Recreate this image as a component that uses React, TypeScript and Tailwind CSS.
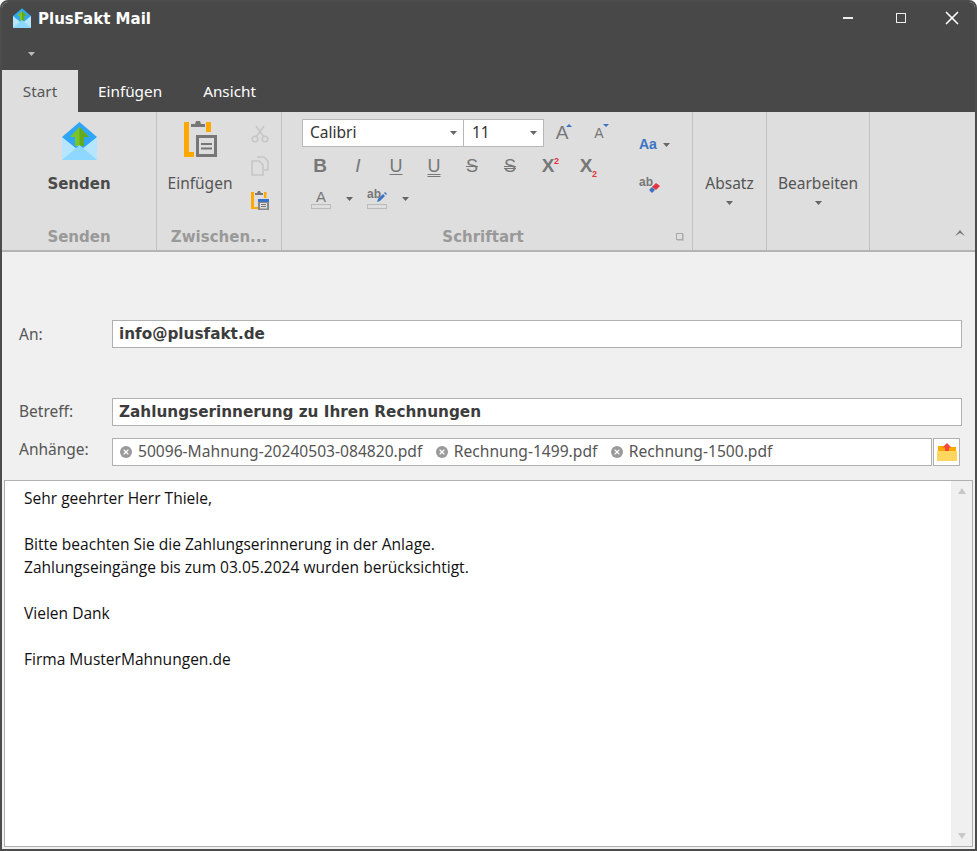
import { X } from "lucide-react";

const uiFont = "font-['Noto_Sans',sans-serif]";
const boldFont = "font-['DejaVu_Sans',sans-serif] font-bold";

const Caret = ({ className = "" }: { className?: string }) => (
  <svg viewBox="0 0 7 4" className={`block w-[7px] h-[4px] fill-[#666] ${className}`}>
    <polygon points="0,0 7,0 3.5,4" />
  </svg>
);

const MailIcon = ({ className = "" }: { className?: string }) => (
  <svg viewBox="0 0 35 38" className={className}>
    <polygon points="0,15 17.5,0 35,15 35,38 0,38" fill="#2ea5f5" />
    <polygon points="0,15 17.5,29 35,15 35,38 0,38" fill="#b5e5ff" />
    <polygon points="8,15 17.5,5 27,15 22,15 22,24 13,24 13,15" fill="#7cc529" />
    <polygon points="17.5,5 27,15 22,15 22,24 17.5,24" fill="#62ab1f" />
    <polygon points="0,38 17.5,23 35,38" fill="#8ed8ff" />
  </svg>
);

const PasteIcon = () => (
  <svg viewBox="0 0 34 37" className="w-[34px] h-[37px]">
    <path d="M1 2h5v30h5v5H1z" fill="#ffa800" />
    <rect x="23" y="2" width="5" height="10" fill="#ffa800" />
    <path d="M8 7V4h4l1-3h4l1 3h4v3z" fill="#777" />
    <rect x="14.5" y="16.5" width="18" height="19" fill="none" stroke="#777" strokeWidth="3" />
    <rect x="18" y="23" width="11" height="2" fill="#777" />
    <rect x="18" y="27.5" width="11" height="2" fill="#777" />
  </svg>
);

const CutIcon = () => (
  <svg viewBox="0 0 18 18" className="w-[18px] h-[18px]" fill="none" stroke="#c6c6c6" strokeWidth="1.6">
    <circle cx="4" cy="14" r="2.8" />
    <circle cx="14" cy="14" r="2.8" />
    <path d="M5.5 11.5 13 1M12.5 11.5 5 1" />
  </svg>
);

const CopyIcon = () => (
  <svg viewBox="0 0 18 20" className="w-[18px] h-[20px]" fill="none" stroke="#c6c6c6" strokeWidth="1.6">
    <path d="M6 1h7l4 4v9h-4" />
    <path d="M1 5h7l4 4v10H1z" fill="#dedede" />
  </svg>
);

const SmallPasteIcon = () => (
  <svg viewBox="0 0 18 19" className="w-[18px] h-[19px]">
    <path d="M0 1h3v15h4v2H0z" fill="#ffa800" />
    <rect x="13" y="1" width="2.5" height="6" fill="#ffa800" />
    <path d="M4 4V2h2l1-2h2l1 2h2v2z" fill="#777" />
    <rect x="7" y="8" width="11" height="11" fill="#888" />
    <rect x="7" y="8" width="11" height="3" fill="#3b73c4" />
    <rect x="9" y="12" width="7" height="5.5" fill="#dedede" />
    <rect x="10" y="13" width="5" height="1" fill="#777" />
    <rect x="10" y="15" width="5" height="1" fill="#777" />
  </svg>
);

const FolderIcon = () => (
  <svg viewBox="0 0 20 18" className="w-[20px] h-[18px]">
    <path d="M1 3h6l1 1h11v7H1z" fill="#ffa800" />
    <path d="M10 0l4.5 4.5H12V9H8V4.5H5.5z" fill="#f4483a" />
    <rect x="0" y="8" width="20" height="10" fill="#ffd75e" />
  </svg>
);

const PencilIcon = () => (
  <svg viewBox="0 0 10 10" className="w-[10px] h-[10px]">
    <path d="M0 10l1-3 5-5 2 2-5 5z" fill="#3b73c4" />
    <path d="M7 1l1-1 2 2-1 1z" fill="#3b73c4" />
  </svg>
);

const EraserIcon = () => (
  <svg viewBox="0 0 11 11" className="w-[11px] h-[11px]">
    <path d="M3 5l4-4 4 3-4 4z" fill="#e5323c" />
    <path d="M0 8l3-3 3 3-3 3z" fill="#3b73c4" />
  </svg>
);

const FmtButton = ({ children }: { children: React.ReactNode }) => (
  <div className="w-[38px] h-[22px] flex items-center justify-center relative font-['Liberation_Sans',sans-serif] text-[#777]">
    {children}
  </div>
);

const Group = ({ label, width, labelClass = "", children }: { label?: string; width: string; labelClass?: string; children?: React.ReactNode }) => (
  <div className={`${width} shrink-0 h-full flex flex-col border-r border-[#c0c0c0] relative`}>
    <div className="flex-1 min-h-0">{children}</div>
    {label && (
      <div className={`h-[33px] text-center text-[15px] leading-[40px] text-[#999] ${boldFont} ${labelClass}`}>{label}</div>
    )}
  </div>
);

const Field = ({ label, value, labelClass = "" }: { label: string; value: string; labelClass?: string }) => (
  <div className="flex items-center">
    <label className={`w-[110px] pl-[17px] text-[15.5px] text-[#555] ${uiFont} ${labelClass}`}>{label}</label>
    <div className={`flex-1 h-[28px] bg-white border border-[#b0b0b0] px-[6px] text-[15.25px] leading-[26px] text-[#3c3c3c] ${boldFont}`}>
      {value}
    </div>
  </div>
);

const Chip = ({ name }: { name: string }) => (
  <span className="flex items-center gap-[6px]">
    <span className="w-[12px] h-[12px] rounded-full bg-[#9a9a9a] flex items-center justify-center">
      <X size={8} color="#fff" strokeWidth={3.5} />
    </span>
    {name}
  </span>
);

export default function App() {
  return (
    <div className="w-[977px] h-[851px] bg-white overflow-hidden">
      <div className="w-full h-full rounded-t-[8px] border-2 border-[#4c4c4c] bg-[#f0f0f0] flex flex-col overflow-hidden">
        <header className="h-[68px] shrink-0 bg-[#484848]">
          <div className="flex items-center h-[34px] pl-[11px]">
            <MailIcon className="w-[18px] h-[20px] -mt-[2px]" />
            <span className={`ml-[7px] text-[15px] text-white ${boldFont}`}>PlusFakt Mail</span>
            <div className="ml-auto -mt-[2px] flex items-center gap-[29px] pr-[12px] text-white">
              <div className="w-[24px] h-[24px] flex items-center justify-center">
                <span className="block w-[10px] h-[1.5px] bg-[#eee]" />
              </div>
              <div className="w-[24px] h-[24px] flex items-center justify-center -mr-[1px]">
                <span className="block w-[10px] h-[10px] border-[1.5px] border-[#eee]" />
              </div>
              <X size={22} strokeWidth={1.8} />
            </div>
          </div>
          <Caret className="ml-[26px] mt-[16px] !fill-[#bbb]" />
        </header>

        <nav className={`h-[42px] shrink-0 bg-[#484848] flex text-[15.3px] leading-[42px] text-white ${uiFont}`}>
          <div className="w-[76px] bg-[#dedede] text-[#555] text-center">Start</div>
          <div className="ml-[20px]">Einfügen</div>
          <div className="ml-[41px]">Ansicht</div>
        </nav>

        <section className={`h-[140px] shrink-0 bg-[#dedede] border-b-2 border-[#b4b4b4] flex text-[15.5px] text-[#555] ${uiFont}`}>
          <Group label="Senden" width="w-[155px]">
            <div className="flex flex-col items-center pt-[10px]">
              <MailIcon className="w-[35px] h-[38px]" />
              <span className={`mt-[13px] text-[15px] text-[#4a4a4a] ${boldFont}`}>Senden</span>
            </div>
          </Group>

          <Group label="Zwischen..." width="w-[125px]">
            <div className="flex">
              <div className="w-[86px] flex flex-col items-center pt-[8px]">
                <PasteIcon />
                <span className="mt-[15px]">Einfügen</span>
              </div>
              <div className="flex flex-col items-start pl-[8px] pt-[13px]">
                <CutIcon />
                <div className="mt-[13px]"><CopyIcon /></div>
                <div className="mt-[15px]"><SmallPasteIcon /></div>
              </div>
            </div>
          </Group>

          <Group label="Schriftart" width="w-[411px]" labelClass="pr-[8px]">
            <div className="flex pl-[20px] pt-[7px]">
              <div className="w-[319px]">
                <div className="flex">
                  <div className="w-[162px] h-[28px] bg-white border border-[#b8b8b8] flex items-center justify-between pl-[7px] pr-[6px] text-[#333]">
                    Calibri <Caret />
                  </div>
                  <div className="w-[80px] h-[28px] bg-white border border-l-0 border-[#b8b8b8] flex items-center justify-between pl-[8px] pr-[6px] text-[#333]">
                    11 <Caret />
                  </div>
                  <div className="w-[36px] h-[28px] flex items-center justify-center text-[19px] text-[#777] relative font-['Liberation_Sans',sans-serif]">
                    A<span className="absolute left-[22px] top-[5px] w-0 h-0 border-l-[3px] border-r-[3px] border-b-[3px] border-l-transparent border-r-transparent border-b-[#3b73c4]" />
                  </div>
                  <div className="w-[38px] h-[28px] flex items-center justify-center text-[14px] text-[#777] relative font-['Liberation_Sans',sans-serif]">
                    A<span className="absolute left-[23px] top-[5px] w-0 h-0 border-l-[3px] border-r-[3px] border-t-[3px] border-l-transparent border-r-transparent border-t-[#3b73c4]" />
                  </div>
                </div>
                <div className="flex mt-[8px] -ml-[1px]">
                  <FmtButton><b className="text-[19px]">B</b></FmtButton>
                  <FmtButton><i className="text-[19px]">I</i></FmtButton>
                  <FmtButton><span className="text-[18px] underline underline-offset-2">U</span></FmtButton>
                  <FmtButton><span className="text-[18px] underline decoration-double underline-offset-2">U</span></FmtButton>
                  <FmtButton><span className="text-[18px] line-through">S</span></FmtButton>
                  <FmtButton><span className="text-[18px] line-through decoration-double">S</span></FmtButton>
                  <FmtButton>
                    <b className="text-[19px]">X</b>
                    <b className="absolute left-[25px] top-[0px] text-[9px] text-[#e5323c]">2</b>
                  </FmtButton>
                  <FmtButton>
                    <b className="text-[19px]">X</b>
                    <b className="absolute left-[25px] top-[13px] text-[9px] text-[#e5323c]">2</b>
                  </FmtButton>
                </div>
                <div className="flex items-center mt-[10px] h-[24px] font-['Liberation_Sans',sans-serif] text-[#777]">
                  <div className="w-[38px] flex flex-col items-center">
                    <span className="text-[15px] leading-[15px]">A</span>
                    <span className="block w-[20px] h-[5px] border border-[#bbb]" />
                  </div>
                  <Caret className="ml-[6px]" />
                  <div className="w-[20px] ml-[14px] flex flex-col items-center relative">
                    <b className="self-start text-[12px] leading-[15px] -mt-[2px]">ab</b>
                    <span className="absolute left-[10px] top-[3px]"><PencilIcon /></span>
                    <span className="block w-[20px] h-[5px] mt-[2px] border border-[#bbb]" />
                  </div>
                  <Caret className="ml-[15px]" />
                </div>
              </div>
              <div className="pl-[18px] pt-[15px] font-['Liberation_Sans',sans-serif]">
                <div className="flex items-center gap-[6px]">
                  <b className="text-[14px] text-[#3b73c4]">Aa</b>
                  <Caret />
                </div>
                <div className="flex items-center relative mt-[22px] h-[16px]">
                  <b className="text-[12px] leading-[12px] text-[#777] -mt-[6px]">ab</b>
                  <span className="absolute left-[10px] top-[5px]"><EraserIcon /></span>
                </div>
              </div>
            </div>
            <span className="absolute right-[9px] bottom-[10px] w-[7px] h-[7px] border border-[#aaa]" />
            <span className="absolute right-[8px] bottom-[9px] w-[7px] h-[7px] border-r border-b border-[#c4c4c4]" />
          </Group>

          <Group width="w-[74px]">
            <div className="flex flex-col items-center pt-[60px]">
              Absatz
              <Caret className="mt-[6px]" />
            </div>
          </Group>

          <Group width="w-[103px]">
            <div className="flex flex-col items-center pt-[60px]">
              Bearbeiten
              <Caret className="mt-[6px]" />
            </div>
          </Group>

          <div className="flex-1 relative">
            <svg viewBox="0 0 10 6" className="absolute right-[10px] bottom-[14px] w-[10px] h-[6px]">
              <path d="M0 6 5 0l5 6-5-3z" fill="#777" />
            </svg>
          </div>
        </section>

        <main className="flex-1 min-h-0 flex flex-col">
          <div className="pt-[68px] pr-[13px] flex flex-col">
            <Field label="An:" value="info@plusfakt.de" labelClass="mt-[1px]" />
            <div className="mt-[50px]">
              <Field label="Betreff:" value="Zahlungserinnerung zu Ihren Rechnungen" labelClass="-mt-[1px]" />
            </div>
            <div className="flex items-center mt-[12px]">
              <label className={`w-[110px] pl-[17px] -mt-[5px] text-[15.5px] text-[#555] ${uiFont}`}>Anhänge:</label>
              <div className={`flex-1 h-[28px] bg-white border border-[#b0b0b0] pl-[7px] flex items-center gap-[13.5px] text-[15.6px] text-[#555] ${uiFont}`}>
                <Chip name="50096-Mahnung-20240503-084820.pdf" />
                <Chip name="Rechnung-1499.pdf" />
                <Chip name="Rechnung-1500.pdf" />
              </div>
              <button className="w-[27px] h-[28px] ml-[1px] mr-[2px] bg-white border border-[#b0b0b0] flex items-center justify-center">
                <FolderIcon />
              </button>
            </div>
          </div>

          <div className="mt-[14px] mx-[2px] mb-[2px] flex-1 min-h-0 bg-white border border-[#b0b0b0] flex">
            <div className="flex-1 pl-[19px] pt-[6px] text-[15.55px] leading-[23px] text-[#111] font-['Open_Sans',sans-serif]">
              <p>Sehr geehrter Herr Thiele,</p>
              <p className="mt-[23px]">Bitte beachten Sie die Zahlungserinnerung in der Anlage.</p>
              <p>Zahlungseingänge bis zum 03.05.2024 wurden berücksichtigt.</p>
              <p className="mt-[23px]">Vielen Dank</p>
              <p className="mt-[23px]">Firma MusterMahnungen.de</p>
            </div>
            <div className="w-[21px] bg-[#f0f0f0] flex flex-col items-center justify-between py-[7px]">
              <span className="w-0 h-0 border-l-[4px] border-r-[4px] border-b-[6px] border-l-transparent border-r-transparent border-b-[#c8c8c8]" />
              <span className="w-0 h-0 border-l-[4px] border-r-[4px] border-t-[6px] border-l-transparent border-r-transparent border-t-[#c8c8c8]" />
            </div>
          </div>
        </main>
      </div>
    </div>
  );
}
